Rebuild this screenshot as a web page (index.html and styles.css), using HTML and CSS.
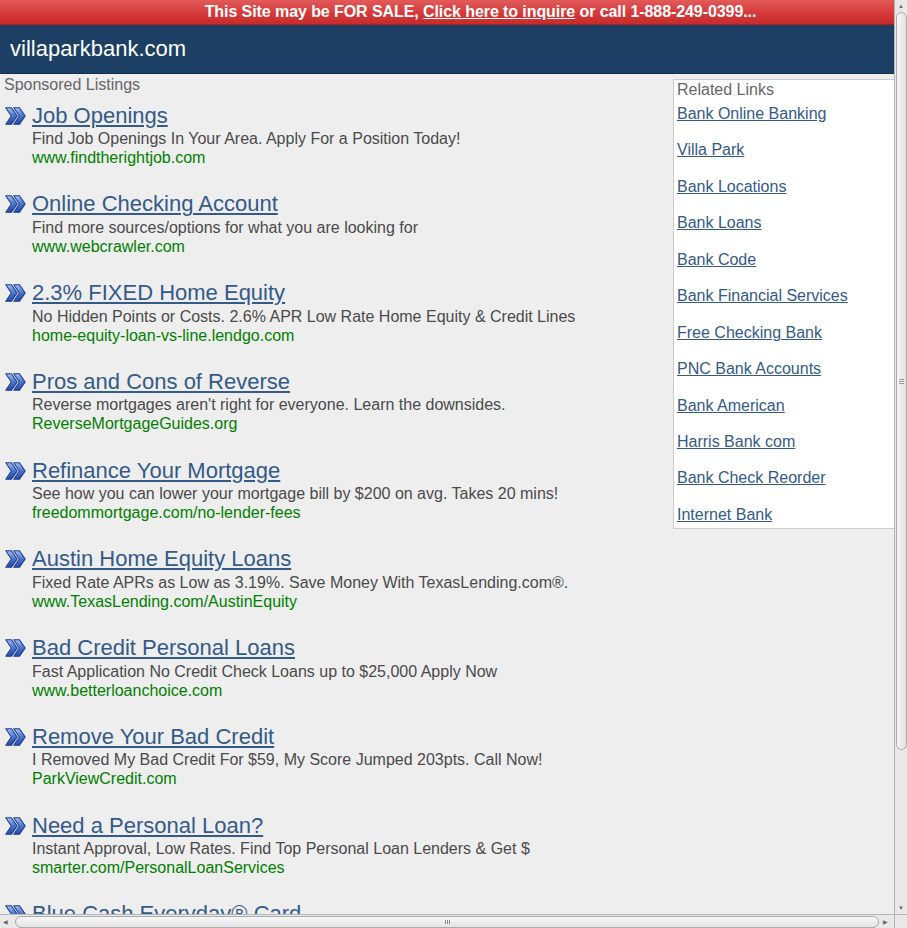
FILE: index.html
```html
<!DOCTYPE html>
<html>
<head>
<meta charset="utf-8">
<title>villaparkbank.com</title>
<link rel="stylesheet" href="styles.css">
</head>
<body>
<div class="page">
  <div class="sale">This Site may be FOR SALE, <a href="#">Click here to inquire</a> or call 1-888-249-0399...</div>
  <div class="header">villaparkbank.com</div>
  <div class="content">
    <div class="main">
      <div class="label">Sponsored Listings</div>
      <div class="listing"><div class="title"><svg class="ic" viewBox="0 0 22 18"><use href="#chev"/></svg><a href="#">Job Openings</a></div><div class="desc">Find Job Openings In Your Area. Apply For a Position Today!</div><div class="url">www.findtherightjob.com</div></div>
      <div class="listing"><div class="title"><svg class="ic" viewBox="0 0 22 18"><use href="#chev"/></svg><a href="#">Online Checking Account</a></div><div class="desc">Find more sources/options for what you are looking for</div><div class="url">www.webcrawler.com</div></div>
      <div class="listing"><div class="title"><svg class="ic" viewBox="0 0 22 18"><use href="#chev"/></svg><a href="#">2.3% FIXED Home Equity</a></div><div class="desc">No Hidden Points or Costs. 2.6% APR Low Rate Home Equity &amp; Credit Lines</div><div class="url">home-equity-loan-vs-line.lendgo.com</div></div>
      <div class="listing"><div class="title"><svg class="ic" viewBox="0 0 22 18"><use href="#chev"/></svg><a href="#">Pros and Cons of Reverse</a></div><div class="desc">Reverse mortgages aren't right for everyone. Learn the downsides.</div><div class="url">ReverseMortgageGuides.org</div></div>
      <div class="listing"><div class="title"><svg class="ic" viewBox="0 0 22 18"><use href="#chev"/></svg><a href="#">Refinance Your Mortgage</a></div><div class="desc">See how you can lower your mortgage bill by $200 on avg. Takes 20 mins!</div><div class="url">freedommortgage.com/no-lender-fees</div></div>
      <div class="listing"><div class="title"><svg class="ic" viewBox="0 0 22 18"><use href="#chev"/></svg><a href="#">Austin Home Equity Loans</a></div><div class="desc">Fixed Rate APRs as Low as 3.19%. Save Money With TexasLending.com®.</div><div class="url">www.TexasLending.com/AustinEquity</div></div>
      <div class="listing"><div class="title"><svg class="ic" viewBox="0 0 22 18"><use href="#chev"/></svg><a href="#">Bad Credit Personal Loans</a></div><div class="desc">Fast Application No Credit Check Loans up to $25,000 Apply Now</div><div class="url">www.betterloanchoice.com</div></div>
      <div class="listing"><div class="title"><svg class="ic" viewBox="0 0 22 18"><use href="#chev"/></svg><a href="#">Remove Your Bad Credit</a></div><div class="desc">I Removed My Bad Credit For $59, My Score Jumped 203pts. Call Now!</div><div class="url">ParkViewCredit.com</div></div>
      <div class="listing"><div class="title"><svg class="ic" viewBox="0 0 22 18"><use href="#chev"/></svg><a href="#">Need a Personal Loan?</a></div><div class="desc">Instant Approval, Low Rates. Find Top Personal Loan Lenders &amp; Get $</div><div class="url">smarter.com/PersonalLoanServices</div></div>
      <div class="listing"><div class="title"><svg class="ic" viewBox="0 0 22 18"><use href="#chev"/></svg><a href="#">Blue Cash Everyday® Card</a></div></div>
    </div>
    <div class="side">
      <div class="side-label">Related Links</div>
      <a href="#">Bank Online Banking</a>
      <a href="#">Villa Park</a>
      <a href="#">Bank Locations</a>
      <a href="#">Bank Loans</a>
      <a href="#">Bank Code</a>
      <a href="#">Bank Financial Services</a>
      <a href="#">Free Checking Bank</a>
      <a href="#">PNC Bank Accounts</a>
      <a href="#">Bank American</a>
      <a href="#">Harris Bank com</a>
      <a href="#">Bank Check Reorder</a>
      <a href="#">Internet Bank</a>
    </div>
  </div>
</div>

<div class="vscroll">
  <div class="arrow up">&#9650;</div>
  <div class="vthumb"><span class="vgrip"></span></div>
  <div class="arrow down">&#9660;</div>
</div>
<div class="hscroll">
  <div class="harrow">&#9664;</div>
  <div class="hthumb"><span class="hgrip"></span></div>
  <div class="harrow">&#9654;</div>
</div>
<div class="corner"></div>

<svg width="0" height="0" class="defs">
  <defs>
    <linearGradient id="cg" x1="0" y1="0" x2="0.3" y2="1">
      <stop offset="0" stop-color="#a9c4f4"/>
      <stop offset="0.5" stop-color="#5f88dd"/>
      <stop offset="1" stop-color="#2249a8"/>
    </linearGradient>
    <g id="chev">
      <path d="M0.8 0.8 H6.5 L12.2 9 L6.5 17.2 H0.8 L6.3 9 Z" fill="url(#cg)" stroke="#1f3f8c" stroke-width="1.1" stroke-linejoin="round"/>
      <path d="M8.8 0.8 H14.5 L20.2 9 L14.5 17.2 H8.8 L14.3 9 Z" fill="url(#cg)" stroke="#1f3f8c" stroke-width="1.1" stroke-linejoin="round"/>
    </g>
  </defs>
</svg>
</body>
</html>
```

FILE: styles.css
```css
html, body {
  margin: 0;
  padding: 0;
  height: 100%;
  overflow: hidden;
  background: #eeeeee;
  font-family: "Liberation Sans", Arial, sans-serif;
}

.page {
  width: 894px;
}

.sale {
  height: 25px;
  line-height: 24px;
  box-sizing: border-box;
  background: linear-gradient(#e35a5a, #d43a3a 55%, #c92a2a);
  border-bottom: 1px solid #a81c1c;
  color: #ffffff;
  font-family: "Liberation Sans Narrow", "Arial Narrow", "Liberation Sans", sans-serif;
  font-weight: bold;
  font-size: 16px;
  letter-spacing: -0.08px;
  text-align: center;
  padding-left: 67px;
  white-space: nowrap;
}

.sale a {
  color: #ffffff;
}

.header {
  height: 49px;
  box-sizing: border-box;
  background: #1c3f63;
  border-bottom: 1px solid #102e4d;
  color: #ffffff;
  font-size: 22px;
  line-height: 48px;
  padding-left: 10px;
}

.content {
  display: flex;
  align-items: flex-start;
}

.main {
  flex: 1;
  padding-left: 4px;
}

.label {
  color: #666666;
  font-size: 16px;
  line-height: 18px;
  margin-top: 2px;
  margin-bottom: 8px;
}

.listing {
  margin-bottom: 23.75px;
}

.title {
  display: flex;
  align-items: center;
  height: 27px;
  font-size: 22px;
}

.ic {
  width: 22px;
  height: 18px;
  margin-left: 1px;
  margin-right: 5px;
  flex: none;
}

.title a {
  color: #335a88;
  text-decoration: underline;
}

.desc {
  padding-left: 28px;
  color: #4a4a4a;
  font-size: 16px;
  line-height: 19px;
  white-space: nowrap;
}

.url {
  padding-left: 28px;
  color: #008000;
  font-size: 16px;
  line-height: 19px;
}

.side {
  width: 221px;
  box-sizing: border-box;
  margin-top: 5px;
  background: #ffffff;
  border: 1px solid #cccccc;
  border-right: none;
  padding: 1px 0 4px 3px;
  display: flex;
  flex-direction: column;
  align-items: flex-start;
}

.side-label {
  color: #666666;
  font-size: 16px;
  line-height: 18px;
  margin-bottom: 6px;
}

.side a {
  color: #335a88;
  font-size: 16px;
  line-height: 18px;
  text-decoration: underline;
}

.side a + a {
  margin-top: 18.45px;
}

.defs {
  position: absolute;
}

/* fake window scrollbars, drawn over the page */
.vscroll {
  position: fixed;
  top: 0;
  right: 0;
  width: 13px;
  height: 914px;
  box-sizing: border-box;
  background: #e9e9e9;
  border-left: 1px solid #b5b5b5;
  display: flex;
  flex-direction: column;
  align-items: center;
}

.arrow {
  font-size: 6px;
  line-height: 12px;
  height: 12px;
  color: #666666;
  flex: none;
}

.vthumb {
  width: 11px;
  height: 738px;
  box-sizing: border-box;
  border: 1px solid #a9a9a9;
  border-radius: 6px;
  background: linear-gradient(90deg, #f6f6f6, #e2e2e2);
  display: flex;
  align-items: center;
  justify-content: center;
}

.vgrip {
  width: 5px;
  height: 5px;
  border-top: 1px solid #999;
  border-bottom: 1px solid #999;
  box-sizing: border-box;
  background: linear-gradient(#999 0 0) center / 5px 1px no-repeat;
}

.down {
  margin-top: auto;
}

.hscroll {
  position: fixed;
  left: 0;
  bottom: 0;
  width: 894px;
  height: 14px;
  box-sizing: border-box;
  background: #e9e9e9;
  border-top: 1px solid #b5b5b5;
  display: flex;
  align-items: center;
  justify-content: space-between;
  padding: 0 3px;
}

.harrow {
  font-size: 6px;
  width: 8px;
  color: #666666;
  flex: none;
}

.hthumb {
  flex: 1;
  margin: 0 4px;
  height: 12px;
  box-sizing: border-box;
  border: 1px solid #a9a9a9;
  border-radius: 6px;
  background: linear-gradient(#f8f8f8, #e4e4e4);
  display: flex;
  align-items: center;
  justify-content: center;
}

.hgrip {
  width: 5px;
  height: 4px;
  border-left: 1px solid #888;
  border-right: 1px solid #888;
  box-sizing: border-box;
  background: linear-gradient(#888 0 0) center / 1px 4px no-repeat;
}

.corner {
  position: fixed;
  right: 0;
  bottom: 0;
  width: 13px;
  height: 14px;
  background: #e9e9e9;
  border-left: 1px solid #b5b5b5;
  border-top: 1px solid #b5b5b5;
  box-sizing: border-box;
}
```
